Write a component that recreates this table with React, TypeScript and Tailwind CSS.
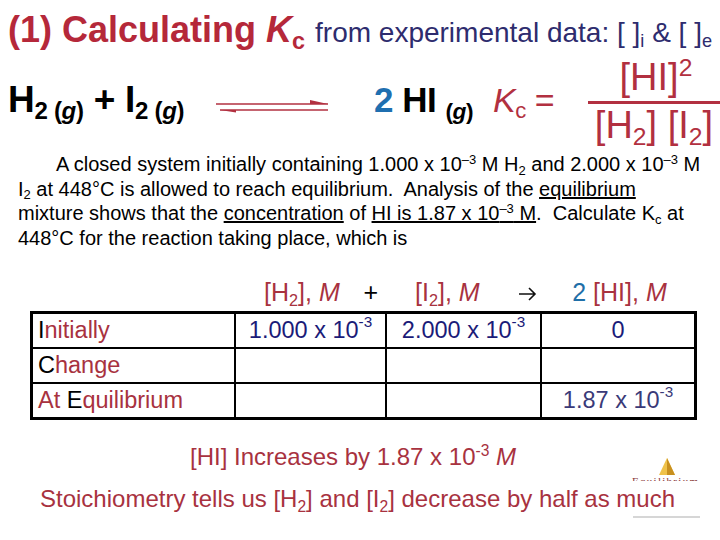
import type { ReactNode } from "react";

const Sub = ({ children }: { children: ReactNode }) => (
  <span className="relative top-[0.3em] text-[0.65em] leading-[0]">{children}</span>
);

const Sup = ({ children }: { children: ReactNode }) => (
  <span className="relative -top-[0.55em] text-[0.65em] leading-[0]">{children}</span>
);

function EquilibriumArrow() {
  return (
    <svg width="120" height="20" viewBox="0 0 120 20" className="shrink-0">
      <line x1="2" y1="8" x2="114" y2="8" stroke="#b23040" strokeWidth="1.6" />
      <path d="M96 4 L114 8 L96 8 Z" fill="#b23040" />
      <line x1="6" y1="14" x2="114" y2="14" stroke="#b23040" strokeWidth="1.6" />
      <path d="M6 14 L22 14 L22 16.5 Z" fill="#b23040" />
    </svg>
  );
}

function RightArrow() {
  return (
    <svg width="19" height="16" viewBox="0 0 19 16" className="inline-block">
      <path d="M1 8 H17 M11 2 L17 8 L11 14" stroke="#111" strokeWidth="1.6" fill="none" />
    </svg>
  );
}

function Logo() {
  return (
    <div className="absolute left-[628px] top-[455px] w-[76px] h-[66px]">
      <svg width="76" height="66" viewBox="0 0 76 66">
        <path d="M39 3 L31 20 L47 20 Z" fill="#efc24a" />
        <path d="M39 3 L39 20 L47 20 Z" fill="#c8901f" />
        <text
          x="4"
          y="30"
          fontSize="11"
          textLength="66"
          fill="#8a3a3a"
          fontFamily="Liberation Serif, serif"
        >
          Equilibrium
        </text>
        <line x1="5" y1="62" x2="72" y2="62" stroke="#d6d6d6" strokeWidth="2" />
      </svg>
    </div>
  );
}

function Cell({ children, className = "" }: { children?: ReactNode; className?: string }) {
  return <div className={`flex items-center justify-center ${className}`}>{children}</div>;
}

export default function App() {
  return (
    <div className="relative w-[720px] h-[540px] bg-white overflow-hidden font-['Liberation_Sans',Arial,sans-serif]">
      {/* title */}
      <div className="h-[58px] pl-[8px] pt-[12px] flex items-baseline whitespace-nowrap leading-none">
        <span className="text-[36px] font-bold text-[#b5283a]">
          (1) Calculating <i>K</i>
          <Sub>c</Sub>
        </span>
        <span className="ml-[10px] text-[28px] text-[#2e2c6e]">
          from experimental data: [ ]<Sub>i</Sub> &amp; [ ]<Sub>e</Sub>
        </span>
      </div>

      {/* reaction */}
      <div className="h-[94px] pb-[10px] flex items-center whitespace-nowrap">
        <div className="pl-[8px] w-[222px] text-[37px] font-bold text-black tracking-[-0.3px]">
          H<Sub>2 (<i>g</i>)</Sub> + I<Sub>2 (<i>g</i>)</Sub>
        </div>
        <div className="pt-[12px]">
          <EquilibriumArrow />
        </div>
        <div className="ml-[40px] text-[35px] font-bold tracking-[-0.5px]">
          <span className="text-[#1f6fb0]">2</span> HI <Sub>(<i>g</i>)</Sub>
        </div>
        <div className="ml-[20px] text-[34px] text-[#b23040] tracking-[-0.5px]">
          <i>K</i>
          <Sub>c</Sub> =
        </div>
        <div className="ml-[34px] flex flex-col items-center text-[38px] text-[#b23040] leading-none">
          <div className="pl-[4px] pb-[5px] pt-[2px]">
            [HI]<Sup>2</Sup>
          </div>
          <div className="w-[132px] h-[3px] bg-[#b23040]" />
          <div className="pt-[2px]">
            [H<Sub>2</Sub>] [I<Sub>2</Sub>]
          </div>
        </div>
      </div>

      {/* problem statement */}
      <div className="px-[18px] text-[20px] leading-[24.5px] text-black whitespace-nowrap">
        <div className="pl-[38px]">
          A closed system initially containing 1.000 x 10<Sup>–3</Sup> M H<Sub>2</Sub> and 2.000 x 10
          <Sup>–3</Sup> M
        </div>
        <div>
          I<Sub>2</Sub> at 448°C is allowed to reach equilibrium.&nbsp; Analysis of the{" "}
          <span className="underline">equilibrium</span>
        </div>
        <div>
          mixture shows that the <span className="underline">concentration</span> of{" "}
          <span className="underline">
            HI is 1.87 x 10<Sup>–3</Sup> M
          </span>
          .&nbsp; Calculate K<Sub>c</Sub> at
        </div>
        <div>448°C for the reaction taking place, which is</div>
      </div>

      {/* ICE table */}
      <div className="mt-[28px] ml-[30px] w-[667px] text-[23.5px] whitespace-nowrap">
        <div className="grid grid-cols-[206px_151px_155px_155px] h-[28px] items-center text-[25px] leading-[28px] text-[#a8323f]">
          <div />
          <div className="flex pl-[28px] pr-[9px]">
            <span>
              [H<Sub>2</Sub>], <i>M</i>
            </span>
            <span className="ml-auto text-black">+</span>
          </div>
          <div className="flex items-center pl-[28px] pr-[5px]">
            <span>
              [I<Sub>2</Sub>], <i>M</i>
            </span>
            <span className="ml-auto">
              <RightArrow />
            </span>
          </div>
          <div className="text-center">
            <span className="text-[#1f6fa8]">2</span> [HI], <i>M</i>
          </div>
        </div>
        <div className="mt-[5px] border-[3px] border-black grid grid-cols-[203px_151px_155px_152px] grid-rows-[35px_35px_33px] [&>div]:border-black">
          <Cell className="justify-start pl-[5px] border-r-2 border-b-2 text-[#a8323f]">
            <span className="text-black">I</span>nitially
          </Cell>
          <Cell className="border-r-2 border-b-2 text-[#1b1b78]">
            1.000 x 10<Sup>-3</Sup>
          </Cell>
          <Cell className="border-r-2 border-b-2 text-[#1b1b78]">
            2.000 x 10<Sup>-3</Sup>
          </Cell>
          <Cell className="border-b-2 text-[#1b1b78]">0</Cell>

          <Cell className="justify-start pl-[5px] border-r-2 border-b-2 text-[#a8323f]">
            <span className="text-black">C</span>hange
          </Cell>
          <Cell className="border-r-2 border-b-2" />
          <Cell className="border-r-2 border-b-2" />
          <Cell className="border-b-2" />

          <Cell className="justify-start pl-[5px] border-r-2 text-[#a8323f]">
            At&nbsp;<span className="text-black">E</span>quilibrium
          </Cell>
          <Cell className="border-r-2" />
          <Cell className="border-r-2" />
          <Cell className="text-[#3a3a78]">
            1.87 x 10<Sup>-3</Sup>
          </Cell>
        </div>
      </div>

      <Logo />

      {/* notes */}
      <div className="mt-[23px] pl-[190px] text-[24px] leading-[28px] text-[#a8323f] whitespace-nowrap">
        [HI] Increases by 1.87 x 10<Sup>-3</Sup> <i>M</i>
      </div>
      <div className="relative z-10 mt-[10px] ml-[40px] w-[660px] pt-[4px] bg-white text-[24px] leading-[28px] text-[#a8323f] whitespace-nowrap">
        Stoichiometry tells us [H<Sub>2</Sub>] and [I<Sub>2</Sub>] decrease by half as much
      </div>
    </div>
  );
}
